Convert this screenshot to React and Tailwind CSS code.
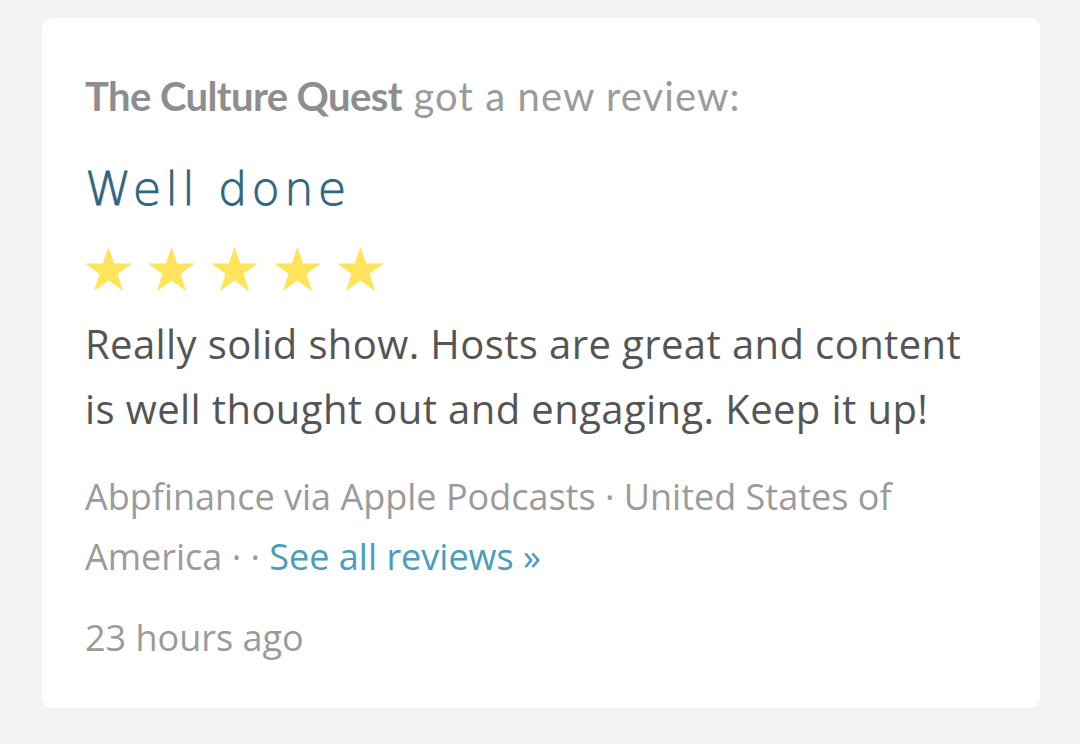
function StarIcon() {
  return (
    <svg viewBox="1.4 1.5 21.2 20" className="w-[47px] h-[44px]" fill="#fde45a">
      <polygon points="12,1.5 14.6,9 22.6,9 16.1,13.7 18.6,21.5 12,16.7 5.4,21.5 7.9,13.7 1.4,9 9.4,9" />
    </svg>
  );
}

export default function App() {
  const sans = { fontFamily: '"Open Sans", "Noto Sans", sans-serif' };
  return (
    <div className="min-h-[744px] bg-[#f3f3f3] pt-[18px] pl-[42px]" style={sans}>
      <div className="w-[998px] h-[690px] rounded-[10px] bg-white pl-[43px] pr-[60px] pt-[54px]">
        <p
          className="text-[40px] leading-[48px] text-[#9b9b9b]"
          style={{ fontFamily: 'Lato, "Noto Sans", sans-serif' }}
        >
          <span className="font-bold text-[#8e8e8e] tracking-[-0.6px]">The Culture Quest</span>
          <span className="tracking-[1.1px]"> got a new review:</span>
        </p>
        <h2
          className="mt-[41px] text-[47px] leading-[56px] font-extralight tracking-[3.8px] text-[#2f6580] [-webkit-text-stroke:0.8px_#2f6580]"
          style={{ fontFamily: '"DejaVu Sans", sans-serif' }}
        >
          Well done
        </h2>
        <div className="mt-[30px] flex gap-[16px]">
          {[0, 1, 2, 3, 4].map((i) => (
            <StarIcon key={i} />
          ))}
        </div>
        <p className="mt-[20px] text-[40px] leading-[65px] tracking-[0.4px] text-[#555555]">
          Really solid show. Hosts are great and content is well thought out and engaging. Keep it up!
        </p>
        <div className="mt-[26px] text-[36px] leading-[60px] text-[#9b9b9b]">
          Abpfinance via Apple Podcasts · United States of America · ·{' '}
          <a className="text-[#4a9dbd]">See all reviews »</a>
        </div>
        <p className="mt-[21px] text-[36px] leading-[60px] text-[#9b9b9b]">23 hours ago</p>
      </div>
    </div>
  );
}
